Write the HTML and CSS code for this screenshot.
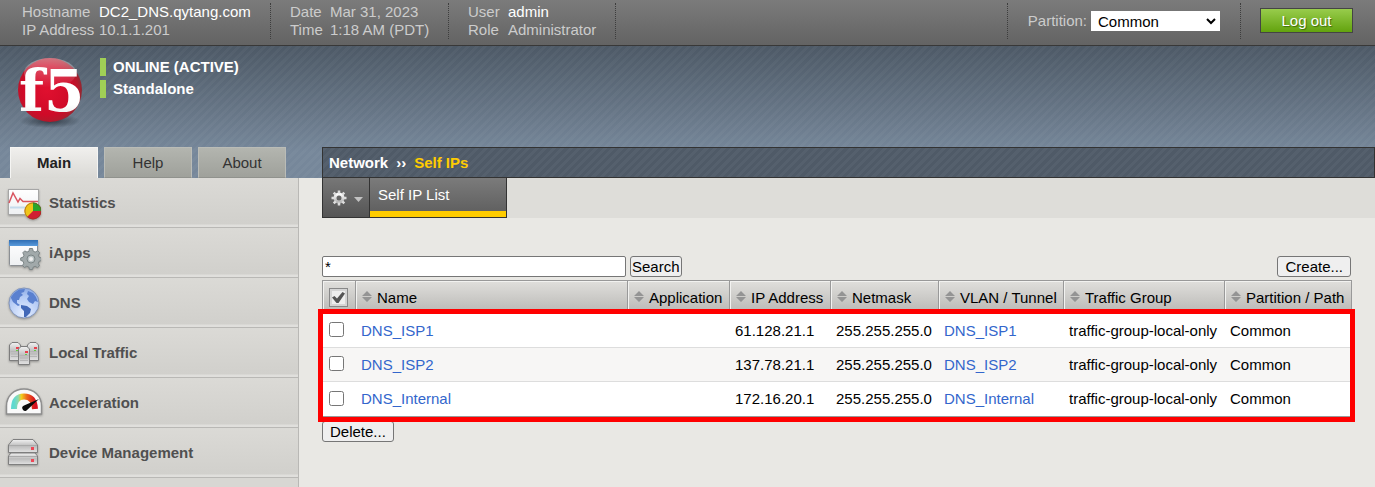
FILE: index.html
```html
<!DOCTYPE html>
<html lang="en">
<head>
<meta charset="utf-8">
<title>Self IPs</title>
<link rel="stylesheet" href="styles.css">
</head>
<body>
<svg class="defs" width="0" height="0" aria-hidden="true">
  <defs>
    <linearGradient id="metal" x1="0" y1="0" x2="0" y2="1"><stop offset="0" stop-color="#f2f2f2"/><stop offset=".5" stop-color="#bcbcbc"/><stop offset="1" stop-color="#e2e2e2"/></linearGradient>
    <linearGradient id="paper" x1="0" y1="0" x2="0" y2="1"><stop offset="0" stop-color="#fff"/><stop offset="1" stop-color="#eef0f2"/></linearGradient>
    <linearGradient id="bar" x1="0" y1="0" x2="0" y2="1"><stop offset="0" stop-color="#2f6db3"/><stop offset="1" stop-color="#5a9bdc"/></linearGradient>
    <linearGradient id="dial" x1="0" y1="0" x2="1" y2="0"><stop offset="0" stop-color="#5fd9d0"/><stop offset=".2" stop-color="#8cd9b0"/><stop offset=".35" stop-color="#f2cf1d"/><stop offset=".6" stop-color="#ee6a1b"/><stop offset="1" stop-color="#d8101f"/></linearGradient>
    <linearGradient id="gear" x1="0" y1="0" x2="0" y2="1"><stop offset="0" stop-color="#fff"/><stop offset="1" stop-color="#b5b5b5"/></linearGradient>
    <radialGradient id="globe" cx=".5" cy=".85" r=".9"><stop offset="0" stop-color="#e6efff"/><stop offset=".6" stop-color="#b5cbf5"/><stop offset="1" stop-color="#86a5e2"/></radialGradient>
    <radialGradient id="ball" cx=".45" cy=".5" r=".55"><stop offset="0" stop-color="#e0102f"/><stop offset=".7" stop-color="#cf0a28"/><stop offset=".9" stop-color="#b5182b"/><stop offset="1" stop-color="#8d2a33"/></radialGradient>
    <linearGradient id="gloss" x1="0" y1="0" x2="0" y2="1"><stop offset="0" stop-color="#fff" stop-opacity=".4"/><stop offset="1" stop-color="#fff" stop-opacity="0"/></linearGradient>
    <linearGradient id="letters" x1="0" y1="0" x2="0" y2="1"><stop offset="0" stop-color="#fff"/><stop offset=".7" stop-color="#fff"/><stop offset="1" stop-color="#dcdcdc"/></linearGradient>
    <radialGradient id="shade"><stop offset="0" stop-color="#222a33" stop-opacity=".8"/><stop offset="1" stop-color="#222a33" stop-opacity="0"/></radialGradient>
    <symbol id="sort" viewBox="0 0 10 11"><path d="M5 0 10 5H0zM5 11 0 6h10z" fill="#949494"/></symbol>
    <g id="server">
      <path d="M.5 3 3 .5h6L11.500 3v15.500h-11z" fill="url(#metal)" stroke="#7d7d7d"/>
      <path d="M2 9.500h8M2 12h8M2 14.500h8" stroke="#b5b5b5"/>
      <path d="M7 5h3v2H7z" fill="#e8404c"/><path d="M7 8h2v1H7z" fill="#67c943"/>
    </g>
  </defs>
</svg>

<header class="topbar">
  <dl class="facts facts-host">
    <dt>Hostname</dt><dd class="strong">DC2_DNS.qytang.com</dd>
    <dt>IP Address</dt><dd>10.1.1.201</dd>
  </dl>
  <dl class="facts facts-date">
    <dt>Date</dt><dd>Mar 31, 2023</dd>
    <dt>Time</dt><dd>1:18 AM (PDT)</dd>
  </dl>
  <dl class="facts facts-user">
    <dt>User</dt><dd class="strong">admin</dd>
    <dt>Role</dt><dd>Administrator</dd>
  </dl>
  <div class="partition">
    <label for="partition">Partition:</label>
    <select id="partition"><option>Common</option></select>
  </div>
  <div class="session"><button class="logout" type="button">Log out</button></div>
</header>

<div class="banner">
  <div class="device">
    <svg class="logo" width="72" height="74" viewBox="0 0 72 74" role="img" aria-label="f5">
      <ellipse cx="36" cy="65" rx="31" ry="7" fill="url(#shade)"/>
      <circle cx="36" cy="34" r="32" fill="url(#ball)"/>
      <ellipse cx="36" cy="17" rx="26" ry="15" fill="url(#gloss)"/>
      <text class="logo-text" x="5" y="55">f5</text>
    </svg>
    <div class="status">
      <div class="status-line">ONLINE (ACTIVE)</div>
      <div class="status-line">Standalone</div>
    </div>
  </div>
  <div class="navrow">
    <nav class="tabs" aria-label="Panels">
      <a class="tab tab-active" href="#main">Main</a>
      <a class="tab" href="#help">Help</a>
      <a class="tab" href="#about">About</a>
    </nav>
    <div class="crumbs"><span>Network</span><span>››</span><a href="#selfips">Self IPs</a></div>
  </div>
</div>

<div class="layout">
  <nav class="sidebar" id="main" aria-label="Main">
    <a class="item" href="#statistics">
      <svg class="icon" width="36" height="36" viewBox="0 0 36 36" aria-hidden="true">
        <rect x="3.500" y="4.500" width="30" height="25" fill="url(#paper)" stroke="#a6a6a6"/>
        <path d="M5 22.500h27" stroke="#c4dbec" stroke-width="2"/>
        <path d="M4 18 8 8l5 9 2-3.500 3 3h15" fill="none" stroke="#d95560" stroke-width="1.500"/>
        <circle cx="28" cy="26" r="8.500" fill="#d01f32"/>
        <path d="M28 26V17.500a8.500 8.500 0 0 0-6 14.500z" fill="#f0c419"/><path d="M28 26V17.500a8.500 8.500 0 0 1 8.500 8.500z" fill="#29a52b"/>
        <circle cx="28" cy="26" r="8" fill="none" stroke="#764719" stroke-opacity=".45"/>
      </svg>Statistics</a>
    <a class="item" href="#iapps">
      <svg class="icon" width="36" height="36" viewBox="0 0 36 36" aria-hidden="true">
        <rect x="4.500" y="5.500" width="28" height="25" rx="1" fill="url(#paper)" stroke="#8b8f94"/>
        <path d="M4 5h29v6H4z" fill="url(#bar)"/>
        <g fill="#a1a9aa" stroke="#7c8586" transform="translate(0 -2)"><path d="m24.500 15.500 3 0 .7 2.700 2 .9 2.500-1.400 2 2.100-1.300 2.500.8 2 2.300.7v2.500l-2.400.8-.8 2 1.200 2.500-2 1.800-2.300-1.300-2 .8-.7 2.400h-3l-.7-2.500-2-.8-2.400 1.300-1.800-2 1.200-2.300-.8-2-2.300-.8v-2.500l2.400-.7.9-2-1.200-2.400 1.900-1.900 2.300 1.200 2-.9z"/><circle cx="26" cy="26" r="4" fill="#bac3c4"/></g>
        <circle cx="26" cy="24" r="2" fill="#eee"/>
      </svg>iApps</a>
    <a class="item" href="#dns">
      <svg class="icon" width="36" height="36" viewBox="0 0 36 36" aria-hidden="true">
        <circle cx="19" cy="18" r="15" fill="url(#globe)" stroke="#8295bb"/>
        <path d="m6 12 3-4 5-3.500 6-.5-1 3-3 1 2 2-3 2-1 3-2 0 0 3 3 2-2 1-5-4-2-4zM23 6l5 2 3 4 2 5-3-1-2 3-4-2-2-3 2-3-2-2z" fill="#5a80cf"/>
        <path d="m16 20 6 1 4 3-1 4-4 4-2 0 0-6-3-3z" fill="#4268b8"/>
      </svg>DNS</a>
    <a class="item" href="#local-traffic">
      <svg class="icon" width="38" height="36" viewBox="0 0 38 36" aria-hidden="true">
        <use href="#server" x="4" y="7"/><use href="#server" x="22" y="7"/><use href="#server" x="13" y="11"/>
      </svg>Local Traffic</a>
    <a class="item" href="#acceleration">
      <svg class="icon" width="40" height="36" viewBox="0 0 40 36" aria-hidden="true">
        <path d="M1.500 29V21C1.500 11 9 4 19 4s17.500 7 17.500 17v8z" fill="#fafafa" stroke="#8e8e8e" stroke-width="1.500"/>
        <path d="M9 24C9 15 13 11.500 19 11.500S29.500 15 30 24" fill="none" stroke="url(#dial)" stroke-width="6"/>
        <path d="m34 14-15 6.500a2.800 2.800 0 1 0 2.500 5z" fill="#0b0b0b"/>
      </svg>Acceleration</a>
    <a class="item" href="#device-management">
      <svg class="icon" width="36" height="36" viewBox="0 0 36 36" aria-hidden="true">
        <g fill="url(#metal)" stroke="#7f7f7f"><path d="M3.500 10 8 4.500h20l4.500 5.500v7.500h-29z"/><path d="M3.500 21 6 18h24l2.500 3v8.500h-29z"/></g>
        <path d="M4 10.500h28M4 21.500h28" stroke="#aaa"/>
        <path d="M26 12h3v3h-3zM26 24h3v3h-3z" fill="#ee4756"/>
      </svg>Device Management</a>
  </nav>

  <main class="content">
    <div class="menubar">
      <button class="gearbtn" type="button" aria-label="Options">
        <svg width="34" height="18" viewBox="0 0 34 18" aria-hidden="true">
          <circle cx="8" cy="9" r="4" fill="none" stroke="url(#gear)" stroke-width="3"/>
          <path d="M8 1.500v3M8 13.500v3M.5 9h3M12.500 9h3M2.700 3.700l2 2M11.300 12.300l2 2M13.300 3.700l-2 2M4.700 12.300l-2 2" stroke="#ddd" stroke-width="2.500"/>
          <path d="M23 8h9l-4.500 5z" fill="#c2c2c2"/>
        </svg>
      </button>
      <a class="menutab" href="#selfips">Self IP List</a>
    </div>

    <form class="tools">
      <input class="search" type="text" value="*" aria-label="Search self IPs">
      <button class="btn btn-tight" type="button">Search</button>
      <button class="btn btn-create" type="button">Create...</button>
    </form>

    <div class="listing" id="selfips">
      <table class="grid">
        <colgroup><col class="c-check"><col><col class="c-app"><col class="c-ip"><col class="c-mask"><col class="c-vlan"><col class="c-group"><col class="c-path"></colgroup>
        <thead>
          <tr>
            <th><label class="all"><input type="checkbox" checked aria-label="Select all"><svg width="13" height="11" viewBox="0 0 13 11" aria-hidden="true"><path d="M0 5.500 2.500 4 5 6.500 10.500 0 13 1.500 6.500 11H4.500z" fill="#555"/></svg></label></th>
            <th><svg class="sort"><use href="#sort"/></svg>Name</th>
            <th><svg class="sort"><use href="#sort"/></svg>Application</th>
            <th><svg class="sort"><use href="#sort"/></svg>IP Address</th>
            <th><svg class="sort"><use href="#sort"/></svg>Netmask</th>
            <th><svg class="sort"><use href="#sort"/></svg>VLAN / Tunnel</th>
            <th><svg class="sort"><use href="#sort"/></svg>Traffic Group</th>
            <th><svg class="sort"><use href="#sort"/></svg>Partition / Path</th>
          </tr>
        </thead>
        <tbody>
          <tr><td><input class="tick" type="checkbox" aria-label="DNS_ISP1"></td><td><a href="#isp1">DNS_ISP1</a></td><td></td><td>61.128.21.1</td><td>255.255.255.0</td><td><a href="#vlan1">DNS_ISP1</a></td><td>traffic-group-local-only</td><td>Common</td></tr>
          <tr><td><input class="tick" type="checkbox" aria-label="DNS_ISP2"></td><td><a href="#isp2">DNS_ISP2</a></td><td></td><td>137.78.21.1</td><td>255.255.255.0</td><td><a href="#vlan2">DNS_ISP2</a></td><td>traffic-group-local-only</td><td>Common</td></tr>
          <tr><td><input class="tick" type="checkbox" aria-label="DNS_Internal"></td><td><a href="#internal">DNS_Internal</a></td><td></td><td>172.16.20.1</td><td>255.255.255.0</td><td><a href="#vlan3">DNS_Internal</a></td><td>traffic-group-local-only</td><td>Common</td></tr>
        </tbody>
      </table>
      <div class="highlight"></div>
    </div>
    <button class="btn btn-delete" type="button">Delete...</button>
  </main>
</div>
</body>
</html>
```

FILE: styles.css
```css
* { box-sizing: border-box; }

body {
  margin: 0;
  min-height: 100vh;
  display: flex;
  flex-direction: column;
  background: #e9e8e4;
  color: #000;
  font: 15px/18px "Liberation Sans", Arial, sans-serif;
}
a { text-decoration: none; }
button, input, select { font: inherit; margin: 0; }
.defs { position: absolute; }

/* Top bar */
.topbar {
  display: flex;
  height: 46px;
  padding: 3px 22px 6px;
  background: linear-gradient(#7b7b7b, #636363);
  border-bottom: 1px solid #383838;
  color: #ccc;
}
.facts {
  display: grid;
  align-content: start;
  margin: 0;
  margin-right: 19px;
  border-right: 1px dotted #3d3d3d;
}
.facts-host { grid-template-columns: 77px 171px; }
.facts-date { grid-template-columns: 40px 118px; }
.facts-user { grid-template-columns: 40px 107px; }
.facts dd { margin: 0; }
.facts .strong { color: #fff; }
.partition {
  display: flex;
  align-items: center;
  gap: 4px;
  margin-left: auto;
  padding: 0 20px;
  border: dotted #3d3d3d;
  border-width: 0 1px;
}
.partition select {
  width: 129px;
  height: 20px;
  border: 1px solid #fff;
  background: #fff;
  color: #000;
  padding: 0 2px;
}
.session { padding-left: 19px; padding-top: 5px; }
.logout {
  width: 93px;
  height: 25px;
  padding: 0;
  border: 1px solid #444;
  background: linear-gradient(#98cc4c, #63a30e);
  color: #fff;
  text-shadow: 1px 1px 1px #3f6b0c;
}

/* Blue banner */
.banner {
  background:
    repeating-linear-gradient(135deg, rgba(255,255,255,.03) 0 3px, transparent 3px 6px),
    linear-gradient(#4d5966, #76879a 80%);
}
.device {
  display: flex;
  gap: 14px;
  height: 101px;
  padding: 10px 14px 0;
}
.logo-text {
  fill: url(#letters);
  font-family: "DejaVu Serif", serif;
  font-size: 58px;
  font-weight: bold;
}
.status {
  display: flex;
  flex-direction: column;
  gap: 4px;
  padding-top: 2px;
  color: #fff;
  font-weight: bold;
}
.status-line {
  border-left: 6px solid #a0cf56;
  padding-left: 7px;
}
.navrow, .layout {
  display: grid;
  grid-template-columns: 322px minmax(0, 1fr);
}
.tabs { display: flex; gap: 6px; padding-left: 10px; }
.tab {
  width: 88px;
  height: 31px;
  line-height: 30px;
  text-align: center;
  color: #333;
  background: linear-gradient(#b3b5af, #9fa19b);
  border: 1px solid #babcb7;
  border-bottom-color: #90928d;
}
.tab-active {
  font-weight: bold;
  color: #222;
  background: linear-gradient(#f0efed, #dad9d5);
  border-color: #f5f5f3;
  border-bottom: 0;
}
.crumbs {
  display: flex;
  gap: 8px;
  height: 31px;
  padding: 6px;
  border: 1px solid #333;
  background: repeating-linear-gradient(135deg, #55606d 0 3px, #4f5a67 3px 6px);
  color: #fff;
  font-weight: bold;
}
.crumbs a { color: #fc0; }

/* Sidebar */
.layout { flex: 1; }
.sidebar {
  margin-right: 23px;
  border-right: 1px solid #b9b8b5;
  background: #d8d7d3;
}
.item {
  display: grid;
  grid-template-columns: 44px 1fr;
  align-items: center;
  height: 50px;
  padding-left: 5px;
  border-bottom: 1px solid #b9b8b5;
  background: linear-gradient(#dbdad6, #d1d0cc 46px, #e0dfdc 47px);
  color: #505050;
  font-weight: bold;
}
.icon { filter: drop-shadow(0 1px 1px rgba(0,0,0,.3)); }

/* Content */
.content { padding-bottom: 20px; }
.menubar { display: flex; height: 40px; background: #deddd9; }
.gearbtn {
  width: 48px;
  padding: 4px 0 0 4px;
  border: 1px solid #333;
  border-top: 0;
  background: linear-gradient(#777, #555);
}
.menutab {
  width: 137px;
  padding: 8px;
  border: 1px solid #333;
  border-width: 0 1px 1px 0;
  background: linear-gradient(#fc0, #fc0) bottom / 100% 6px no-repeat, linear-gradient(#7b7b7b, #5c5c5c);
  color: #fff;
}
.tools {
  display: flex;
  gap: 4px;
  margin: 38px 24px 3px 0;
}
.search {
  width: 304px;
  height: 21px;
  padding: 0 2px;
  border: 1px solid #767676;
  border-radius: 2px;
}
.btn {
  height: 21px;
  padding: 0 7px;
  border: 1px solid #767676;
  border-radius: 3px;
  background: #efefef;
  color: #000;
}
.btn-tight { padding: 0 1px; }
.btn-create { margin-left: auto; }

.listing { position: relative; margin-right: 23px; }
.grid {
  width: 100%;
  table-layout: fixed;
  border-spacing: 0;
  border: 1px solid #999;
  border-width: 1px 1px 2px 0;
  background: #fff;
}
.c-check { width: 33px; }
.c-app { width: 102px; }
.c-ip { width: 101px; }
.c-mask { width: 108px; }
.c-vlan { width: 125px; }
.c-group { width: 161px; }
.c-path { width: 127px; }
.grid th {
  height: 33px;
  padding: 0 0 0 6px;
  border-left: 1px solid #999;
  background: linear-gradient(#e0dfdc, #b8b7b4);
  box-shadow: inset 1px 1px #f2f2f0;
  font-weight: normal;
  text-align: left;
  white-space: nowrap;
}
.sort { width: 10px; height: 11px; margin: 0 5px 1px 0; }
.grid td {
  height: 34px;
  padding: 0 6px;
  border-bottom: 1px solid #ddd;
  white-space: nowrap;
}
.grid tr:last-child td { border-bottom: 0; }
.grid tr:nth-child(even) td { background: #f7f6f5; }
.grid td a { color: #36c; }
.all { display: grid; width: 19px; height: 19px; place-items: center; }
.all input, .all svg { grid-area: 1 / 1; }
.all input {
  appearance: none;
  width: 19px;
  height: 19px;
  border: 1px solid #888;
  background: #eee;
  box-shadow: inset 0 0 0 2px #d5d5d5;
}
.all svg { pointer-events: none; }
.tick { display: block; width: 15px; height: 15px; margin: 0 0 2px 1px; }
.highlight {
  position: absolute;
  inset: 29px -3px -4px -4px;
  border: 5px solid #f00;
  pointer-events: none;
}
.btn-delete { display: block; margin-top: 3px; }
```
